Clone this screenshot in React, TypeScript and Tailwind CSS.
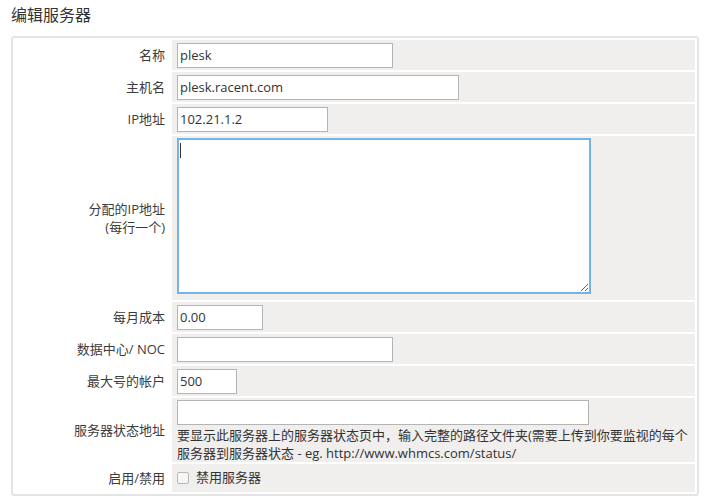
import React from 'react';

type Row = { label: React.ReactNode; field: React.ReactNode; h: string };

const font = { fontFamily: '"Open Sans", "Noto Sans CJK SC", sans-serif' };

const inputCls = 'h-[25px] border border-[#b4b4b4] bg-white pl-[2px] pr-[3px] text-[13px] text-[#333] outline-none';

function TextInput({ w, value }: { w: string; value?: string }) {
    return <input className={`${inputCls} ${w}`} defaultValue={value} />;
}

export default function App() {
    const rows: Row[] = [
        { label: '名称', field: <TextInput w="w-[216px]" value="plesk" />, h: 'h-[30px]' },
        { label: '主机名', field: <TextInput w="w-[282px]" value="plesk.racent.com" />, h: 'h-[30px]' },
        { label: 'IP地址', field: <TextInput w="w-[151px]" value="102.21.1.2" />, h: 'h-[30px]' },
        {
            label: (<>分配的IP地址<br />(每行一个)</>),
            field: (
                <div className="relative self-start pt-[2px]">
                    <textarea className="block w-[414px] h-[156px] border-2 border-[#74b2e8] bg-white px-[3px] text-[13px] outline-none" />
                    {/* Cursor im Textfeld */}
                    <span className="absolute left-[3px] top-[7px] w-[1px] h-[15px] bg-[#333]" />
                </div>
            ),
            h: 'h-[164px]',
        },
        { label: '每月成本', field: <TextInput w="w-[86px]" value="0.00" />, h: 'h-[30px]' },
        { label: '数据中心/ NOC', field: <TextInput w="w-[216px]" />, h: 'h-[30px]' },
        { label: '最大号的帐户', field: <TextInput w="w-[60px]" value="500" />, h: 'h-[30px]' },
        {
            label: '服务器状态地址',
            field: (
                <div className="self-start pt-[2px] flex flex-col">
                    <TextInput w="w-[412px]" />
                    <div className="mt-[1px] text-[13px] leading-[18px] text-[#333] whitespace-nowrap">
                        要显示此服务器上的服务器状态页中，输入完整的路径文件夹(需要上传到你要监视的每个<br />
                        服务器到服务器状态 - eg. http://www.whmcs.com/status/
                    </div>
                </div>
            ),
            h: 'h-[64px]',
        },
        {
            label: '启用/禁用',
            field: (
                <label className="flex items-center gap-[7px] text-[13px] text-[#333]">
                    <span className="w-[12px] h-[12px] border border-[#b8b8b8] bg-[#f6f6f6] rounded-[2px]" />
                    禁用服务器
                </label>
            ),
            h: 'h-[28px]',
        },
    ];

    return (
        <div className="w-[709px] h-[500px] bg-white text-[#333]" style={font}>
            <h1 className="pl-[11px] pt-[4px] text-[16px] leading-[22px] font-normal text-[#333]">编辑服务器</h1>
            <div className="ml-[11px] mt-[10px] w-[688px] border-2 border-[#e4e4e4] rounded-[3px] p-[2px]">
                <div className="grid grid-cols-[154px_1fr] gap-x-[2px] gap-y-[2px] pl-[1px]">
                    {rows.map((row, i) => (
                        <React.Fragment key={i}>
                            <div className={`${row.h} flex items-center justify-end pr-[5px] text-right text-[13px] leading-[18px] text-[#3c3c3c]`}>
                                <div>{row.label}</div>
                            </div>
                            <div className={`${row.h} flex items-center bg-[#f0efee] pl-[5px]`}>
                                {row.field}
                            </div>
                        </React.Fragment>
                    ))}
                </div>
            </div>
        </div>
    );
}
